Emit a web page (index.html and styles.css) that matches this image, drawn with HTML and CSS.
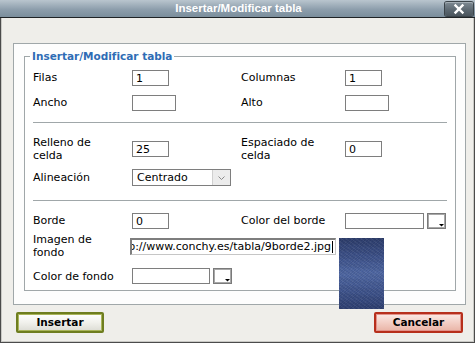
FILE: index.html
```html
<!DOCTYPE html>
<html lang="es">
<head>
<meta charset="utf-8">
<title>Insertar/Modificar tabla</title>
<link rel="stylesheet" href="styles.css">
</head>
<body>
<div class="window">
  <div class="titlebar">
    <span></span>
    <span class="title">Insertar/Modificar tabla</span>
    <span class="close">
      <svg width="28" height="14" viewBox="0 0 28 14"><path d="M10.5 3.5 L17.5 10.5 M17.5 3.5 L10.5 10.5" stroke="#fff" stroke-width="2.4" stroke-linecap="square"/></svg>
    </span>
  </div>
  <div class="content">
    <div class="panel">
      <fieldset class="fs">
        <legend>Insertar/Modificar tabla</legend>
        <div class="sec sec1">
          <span class="lbl">Filas</span>
          <span class="inp w37">1</span>
          <span class="lbl">Columnas</span>
          <span class="inp w37">1</span>
          <span class="lbl">Ancho</span>
          <span class="inp w44"></span>
          <span class="lbl">Alto</span>
          <span class="inp w44"></span>
        </div>
        <div class="rule"></div>
        <div class="sec sec2">
          <span class="lbl">Relleno de<br>celda</span>
          <span class="inp w37">25</span>
          <span class="lbl">Espaciado de<br>celda</span>
          <span class="inp w37">0</span>
          <span class="lbl">Alineación</span>
          <span class="select">
            <span class="sel-text">Centrado</span>
            <span class="sel-btn">
              <svg width="17" height="15" viewBox="0 0 17 15"><path d="M5.5 6.5 L8.5 9.5 L11.5 6.5" fill="none" stroke="#8a8a8a" stroke-width="1"/></svg>
            </span>
          </span>
        </div>
        <div class="rule rule2"></div>
        <div class="sec sec3">
          <span class="lbl">Borde</span>
          <span class="inp w37">0</span>
          <span class="lbl">Color del borde</span>
          <span class="color">
            <span class="inp w79"></span>
            <svg class="picker" width="19" height="16" viewBox="0 0 19 16"><rect x="0.5" y="0.5" width="18" height="15" fill="#fff" stroke="#7a7a7a"/><rect x="1.5" y="1.5" width="16" height="13" fill="#fff" stroke="#a8a8a8"/><path d="M12 11 H17 L14.5 13.5 Z" fill="#000"/></svg>
          </span>
          <span class="lbl">Imagen de<br>fondo</span>
          <span class="imgcell">
            <span class="inp url"><span class="url-text">http://www.conchy.es/tabla/9borde2.jpg</span><span class="caret"></span></span>
            <span class="preview"></span>
          </span>
        </div>
        <div class="sec sec4">
          <span class="lbl">Color de fondo</span>
          <span class="color">
            <span class="inp w78"></span>
            <svg class="picker" width="19" height="16" viewBox="0 0 19 16"><rect x="0.5" y="0.5" width="18" height="15" fill="#fff" stroke="#7a7a7a"/><rect x="1.5" y="1.5" width="16" height="13" fill="#fff" stroke="#a8a8a8"/><path d="M12 11 H17 L14.5 13.5 Z" fill="#000"/></svg>
          </span>
        </div>
      </fieldset>
    </div>
    <div class="buttons">
      <span class="btn ok">Insertar</span>
      <span class="btn cancel">Cancelar</span>
    </div>
  </div>
</div>
</body>
</html>
```
FILE: styles.css
```css
html, body {
  margin: 0;
  padding: 0;
  background: #efeeea;
}
body {
  width: 475px;
  height: 343px;
  overflow: hidden;
  font-family: "DejaVu Sans", Verdana, sans-serif;
  font-size: 11px;
  line-height: 13px;
  color: #000;
}
.window {
  box-sizing: border-box;
  width: 475px;
  height: 343px;
  border: 1px solid #4b4b4b;
  border-top: none;
  box-shadow: inset 1px 0 0 #c9c9c5, inset -1px 0 0 #c9c9c5, inset 0 -1px 0 #c9c9c5;
  background: #efeeea;
  display: flex;
  flex-direction: column;
}
.titlebar {
  height: 17px;
  border-bottom: 1px solid #1f2326;
  background: linear-gradient(#b9c5ce, #8d9eac 55%, #7b8e9c);
  display: grid;
  grid-template-columns: 1fr auto 1fr;
  align-items: center;
  margin: 0 -1px;
}
.title {
  color: #fff;
  font-family: "Liberation Sans", Arial, sans-serif;
  font-weight: bold;
  font-size: 11.5px;
  padding-left: 2px;
}
.close {
  justify-self: end;
  margin-right: 2px;
  width: 28px;
  height: 14px;
  border-radius: 2px;
  background: linear-gradient(#7f8b94, #5a666f 60%, #4a555d);
  box-shadow: 0 0 0 1px #3b444a, inset 0 1px 0 #a3adb4;
  display: flex;
}
.content {
  flex: 1;
  padding: 25px 8px 0 12px;
  display: flex;
  flex-direction: column;
}
.panel {
  border: 1px solid #a0a7a9;
  background: #fdfdfd;
  padding: 6px 9px 0 10px;
  height: 262px;
  box-sizing: border-box;
}
.fs {
  margin: 0;
  border: 1px solid #a0a7a9;
  padding: 2px 8px 1px 8px;
  background: #fff;
}
.fs legend {
  color: #2e6cb5;
  font-weight: bold;
  font-size: 10.5px;
  padding: 0 2px;
  margin-left: -3px;
}
.sec {
  display: grid;
  grid-template-columns: 99px 109px 104px 1fr;
  align-items: center;
}
.sec1 { grid-template-rows: 25px 25px; }
.sec2 { grid-template-rows: 28px 28px; margin-top: 12px; }
.sec3 { grid-template-rows: 25px 26px; margin-top: 7px; }
.sec4 { grid-template-rows: 26px; margin-top: 4px; }
.rule {
  height: 1px;
  background: #a0a7a9;
  margin-top: 7px;
}
.rule2 { margin-top: 9px; }
.lbl { white-space: nowrap; }
.inp {
  box-sizing: border-box;
  height: 16px;
  border: 1px solid #7e7e7e;
  background: #fff;
  padding: 1px 3px 0;
  line-height: 13px;
  display: block;
  overflow: hidden;
  white-space: nowrap;
}
.w37 { width: 37px; }
.w44 { width: 44px; }
.w78 { width: 78px; }
.w79 { width: 79px; }
.select {
  grid-column: 2 / span 2;
  width: 99px;
  height: 17px;
  box-sizing: border-box;
  border: 1px solid #7e7e7e;
  background: #fff;
  display: flex;
  align-items: stretch;
}
.sel-text {
  flex: 1;
  padding: 1px 0 0 4px;
  line-height: 14px;
}
.sel-btn {
  width: 17px;
  background: #ececec;
  border-left: 1px solid #d0d0d0;
  display: flex;
}
.color {
  display: flex;
  align-items: center;
  gap: 3px;
}
.picker { display: block; }
.imgcell {
  grid-column: 2 / span 3;
  position: relative;
  margin-left: -2px;
  display: block;
}
.url {
  width: 206px;
  height: 17px;
  border-width: 2px 1px 1px 2px;
  border-style: solid;
  border-color: #7e7e7e #c6c6c6 #c6c6c6 #7e7e7e;
  padding: 0 2px 0 0;
  display: flex;
  justify-content: flex-end;
  align-items: center;
}
.url-text { flex: none; }
.caret {
  flex: none;
  width: 1px;
  height: 12px;
  background: #000;
  margin-left: 1px;
}
.preview {
  position: absolute;
  left: 209px;
  top: 0;
  width: 45px;
  height: 71px;
  background:
    repeating-linear-gradient(37deg, rgba(255,255,255,0.06) 0 1px, transparent 1px 3px),
    repeating-linear-gradient(-41deg, rgba(0,0,0,0.08) 0 1px, transparent 1px 2px),
    linear-gradient(#2d3d6b, #3c5087 25%, #4f67a2 50%, #3f548c 75%, #2e3f70);
}
.buttons {
  display: flex;
  justify-content: space-between;
  padding: 7px 3px 0 3px;
}
.btn {
  box-sizing: border-box;
  height: 21px;
  width: 88px;
  border-radius: 2px;
  font-weight: bold;
  font-size: 10.5px;
  display: flex;
  align-items: center;
  justify-content: center;
}
.ok {
  border: 2px solid #6e7d1f;
  box-shadow: 0 0 0 1px #a9b45a inset;
  background: linear-gradient(#ffffff, #f1f1ec 50%, #dcdcd4);
}
.cancel {
  width: 89px;
  border: 2px solid #b72f1c;
  box-shadow: 0 0 0 1px #e3928a inset;
  background: linear-gradient(#fbe9e4, #f3cfc6 50%, #e9b4a6);
}
```
